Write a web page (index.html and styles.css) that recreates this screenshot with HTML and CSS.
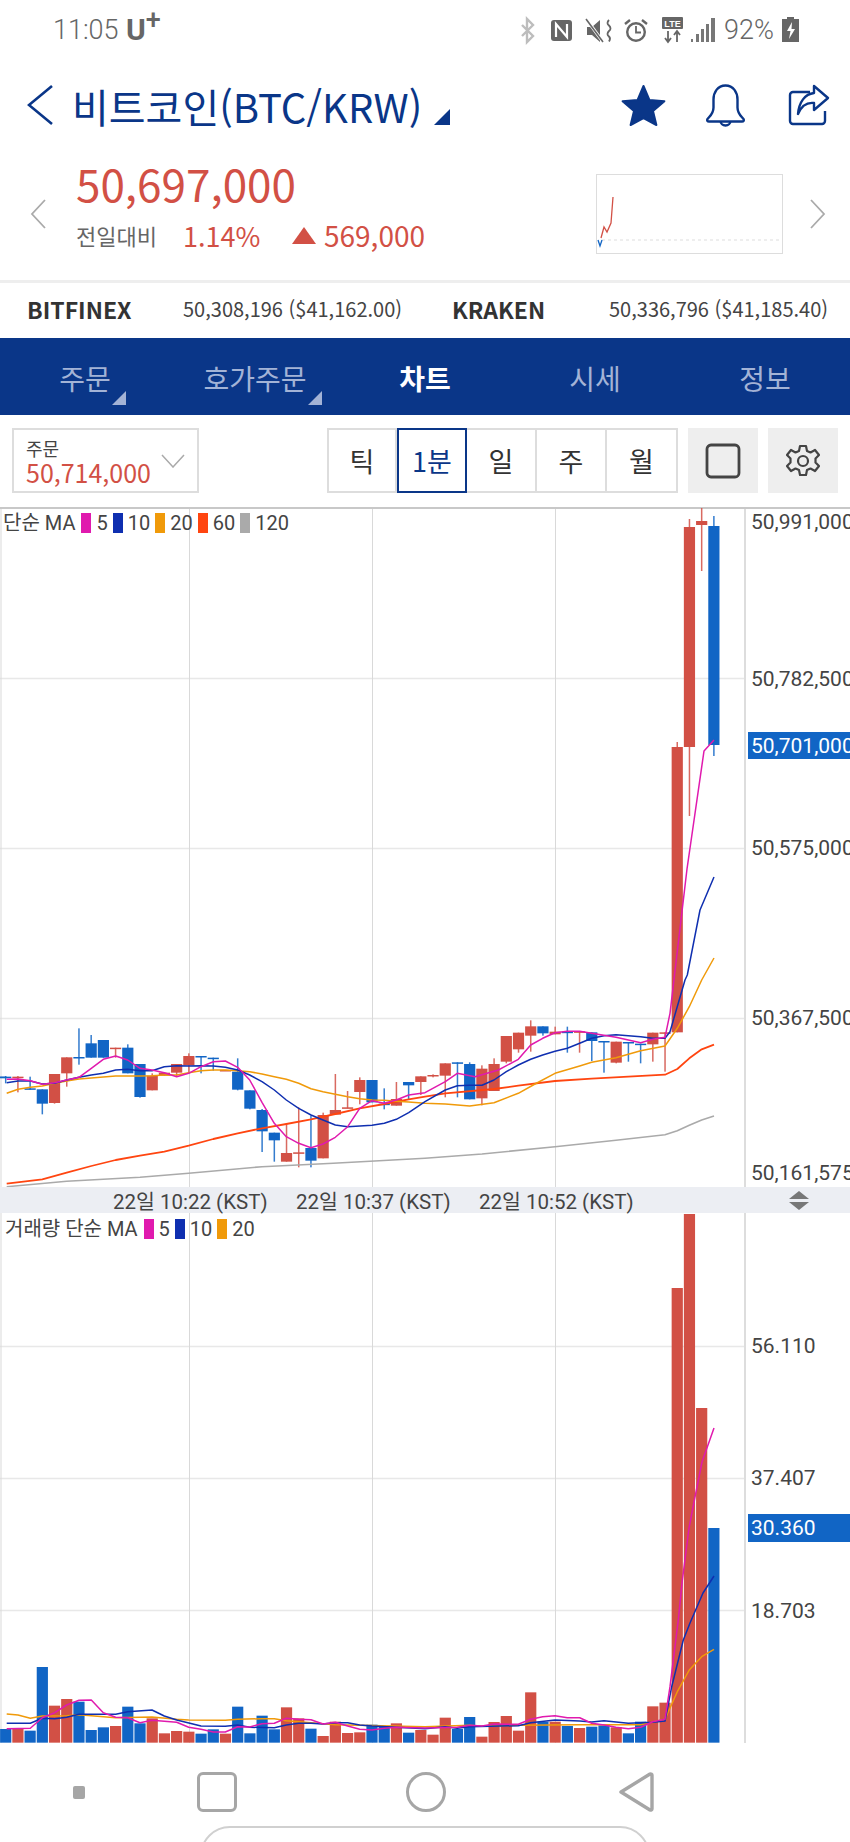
FILE: index.html
```html
<!DOCTYPE html>
<html lang="ko">
<head>
    <meta charset="UTF-8">
    <meta name="viewport" content="width=device-width, initial-scale=1.0">
    <title>비트코인 차트</title>
    <link rel="stylesheet" href="styles.css">
</head>
<body>
    <div class="phone">
        <div class="statusbar">
            <span class="clock">11:05</span>
            <span class="carrier">U<sup>+</sup></span>
            <svg class="status-icons" width="197" height="30" viewBox="520 14 197 30">
                <path d="M522 24 L533 35 L527 41 V18 L533 24 L522 35" fill="none" stroke="#bdbdbd" stroke-width="2.4"/>
                <rect x="551" y="19" width="21" height="21" rx="3" fill="#666"/>
                <path d="M556 36 V23 L567 36 V23" fill="none" stroke="#fff" stroke-width="2.2"/>
                <path d="M587 26 H592 L600 19 V41 L592 34 H587 Z" fill="#666"/>
                <path d="M587 19 L603 41" stroke="#fff" stroke-width="3"/>
                <path d="M586 18 L603 41" stroke="#666" stroke-width="1.6"/>
                <path d="M609 19 q-3 3 0 5.5 q3 3 0 5.5 q-3 3 0 5.5 q2 2 0 5" fill="none" stroke="#666" stroke-width="1.8"/>
                <circle cx="636" cy="31" r="8.8" fill="none" stroke="#666" stroke-width="2.4"/>
                <path d="M636 25 V31.5 H641" fill="none" stroke="#666" stroke-width="1.8"/>
                <path d="M625 23 L630 19 M647 23 L642 19" stroke="#666" stroke-width="2.4"/>
                <rect x="662" y="16" width="21" height="12" rx="1" fill="#666"/>
                <text x="672.5" y="25.5" class="lte">LTE</text>
                <path d="M668 30 V40 M665 37 L668 41 L671 37 M677 41 V31 M674 34 L677 30 L680 34" fill="none" stroke="#666" stroke-width="1.8"/>
                <path d="M691 41 h2 v-3 h-2z M696 41 h3 v-8 h-3z M701 41 h3 v-13 h-3z M706 41 h3 v-18 h-3z M711 41 h4 v-24 h-4z" fill="#777"/>
            </svg>
            <span class="battery-text">92%</span>
            <svg class="battery" width="18" height="26" viewBox="782 16 18 26">
                <path d="M787 16 h7 v2 h5 v23 h-17 v-23 h5z" fill="#666"/>
                <path d="M792 21 L787 30 H790.5 L789 38 L795 28 H791.5 Z" fill="#fff"/>
            </svg>
        </div>

        <header class="title-row">
            <svg class="back" width="26" height="42" viewBox="27 87 26 42">
                <path d="M52 89 L29 108 L52 127" fill="none" stroke="#0a3688" stroke-width="2.6"/>
            </svg>
            <h1>비트코인(BTC/KRW)</h1>
            <span class="corner-arrow"></span>
            <div class="title-actions">
                <svg width="46" height="44" viewBox="621 86 46 44">
                    <path d="M643.5 89 L649.4 102.9 L664.4 104.2 L653 114.1 L656.4 128 L643.5 121 L630.6 128 L634 114.1 L622.6 104.2 L637.6 102.9 Z" fill="#0a3688" stroke="#0a3688" stroke-width="2" stroke-linejoin="round"/>
                </svg>
                <svg width="42" height="44" viewBox="705 86 42 44">
                    <path d="M725.5 88.5 c-8 0 -12 7 -12 14 v8 c0 6 -3 8 -6 11.500 c-1 1.500 0 2.500 1.500 2.500 h33 c1.500 0 2.500 -1 1.500 -2.500 c-3 -3.500 -6 -5.500 -6 -11.500 v-8 c0 -7 -4 -14 -12 -14z M720.500 124 a5 4.500 0 0 0 10 0" fill="none" stroke="#0a3688" stroke-width="2.400"/>
                </svg>
                <svg class="share" width="42" height="44" viewBox="788 86 42 44">
                    <path d="M810 95 H793 a3 3 0 0 0 -3 3 v26 a3 3 0 0 0 3 3 h29 a3 3 0 0 0 3 -3 v-10" fill="none" stroke="#0a3688" stroke-width="2.400"/>
                    <path d="M814 89 L828 101 L814 113 V106 C 806 105 801 110 798 117 C 799 105 805 97 814 96 Z" fill="none" stroke="#0a3688" stroke-width="2.400" stroke-linejoin="round"/>
                </svg>
            </div>
        </header>

        <section class="quote">
            <svg class="quote-arrow" width="16" height="30" viewBox="0 0 16 30">
                <path d="M15 1 L2 15 L15 29" fill="none" stroke="#aaa" stroke-width="1.800"/>
            </svg>
            <div class="quote-main">
                <div class="price">50,697,000</div>
                <div class="change">
                    <span class="change-label">전일대비</span>
                    <span class="change-rate">1.14%</span>
                    <span class="up-mark"></span>
                    <span class="change-amount">569,000</span>
                </div>
            </div>
            <svg class="mini-chart" width="187" height="80" viewBox="596 174 187 80">
                <rect x="596.500" y="174.500" width="186" height="79" fill="#fff" stroke="#ddd"/>
                <path d="M602 240 H780" stroke="#ddd" stroke-width="1" stroke-dasharray="3 3"/>
                <path d="M598 240 L600 246 L602 240" fill="none" stroke="#1165c5" stroke-width="1.300"/>
                <path d="M601 238 L604 227 L607 232 L611 223 L613 197" fill="none" stroke="#d25045" stroke-width="1.300"/>
            </svg>
            <svg class="quote-arrow next" width="16" height="30" viewBox="0 0 16 30">
                <path d="M1 1 L14 15 L1 29" fill="none" stroke="#aaa" stroke-width="1.800"/>
            </svg>
        </section>

        <section class="exchanges">
            <strong>BITFINEX</strong>
            <span>50,308,196 ($41,162.00)</span>
            <strong>KRAKEN</strong>
            <span>50,336,796 ($41,185.40)</span>
        </section>

        <nav class="tabs">
            <a class="tab has-menu">주문</a>
            <a class="tab has-menu">호가주문</a>
            <a class="tab active">차트</a>
            <a class="tab">시세</a>
            <a class="tab">정보</a>
        </nav>

        <section class="toolbar">
            <div class="order-box">
                <div>
                    <div class="order-label">주문</div>
                    <div class="order-price">50,714,000</div>
                </div>
                <svg width="24" height="14" viewBox="0 0 24 14">
                    <path d="M1 1 L12 13 L23 1" fill="none" stroke="#aaa" stroke-width="1.500"/>
                </svg>
            </div>
            <div class="periods">
                <button>틱</button>
                <button class="selected">1분</button>
                <button>일</button>
                <button>주</button>
                <button>월</button>
            </div>
            <button class="tool-btn">
                <svg width="36" height="36" viewBox="0 0 36 36">
                    <rect x="2" y="2" width="32" height="32" rx="4" fill="none" stroke="#444" stroke-width="2.800"/>
                </svg>
            </button>
            <button class="tool-btn">
                <svg width="36" height="36" viewBox="0 0 36 36">
                    <path d="M15 3 h6 l1 5 l3.500 1.500 l4.500 -2.500 l4 5 l-3.500 3.500 l0 4 l3.500 3.500 l-4 5 l-4.500 -2.500 l-3.500 1.500 l-1 5 h-6 l-1 -5 l-3.500 -1.500 l-4.500 2.500 l-4 -5 l3.500 -3.500 l0 -4 l-3.500 -3.500 l4 -5 l4.500 2.500 l3.500 -1.500 z" fill="none" stroke="#444" stroke-width="2.200" stroke-linejoin="round"/>
                    <circle cx="18" cy="18" r="5" fill="none" stroke="#444" stroke-width="2.200"/>
                </svg>
            </button>
        </section>

        <section class="panel price-panel">
            <svg id="priceChart" width="850" height="680" viewBox="0 507 850 680">
                <g class="grid">
                    <path d="M0 678.500 H745 M0 848.500 H745 M0 1018.500 H745"/>
                    <path class="grid-v" d="M1 507 V1187 M189.500 507 V1187 M372.500 507 V1187 M555.500 507 V1187"/>
                    <path class="grid-edge" d="M745 507 V1187"/>
                    <path class="grid-top" d="M0 507.500 H850"/>
                </g>
                <g id="priceSeries"></g>
                <g class="axis">
                    <text x="751" y="529">50,991,000</text>
                    <text x="751" y="686">50,782,500</text>
                    <text x="751" y="855">50,575,000</text>
                    <text x="751" y="1025">50,367,500</text>
                    <text x="751" y="1180">50,161,575</text>
                    <rect class="badge" x="748" y="732" width="102" height="27"/>
                    <text class="badge-text" x="751" y="753">50,701,000</text>
                </g>
            </svg>
            <div class="legend">
                <span class="legend-name">단순 MA</span>
                <i class="swatch ma5"></i><span>5</span>
                <i class="swatch ma10"></i><span>10</span>
                <i class="swatch ma20"></i><span>20</span>
                <i class="swatch ma60"></i><span>60</span>
                <i class="swatch ma120"></i><span>120</span>
            </div>
        </section>

        <div class="time-axis">
            <span class="tick">22일 10:22 (KST)</span>
            <span class="tick">22일 10:37 (KST)</span>
            <span class="tick">22일 10:52 (KST)</span>
            <svg class="resize-handle" width="22" height="20" viewBox="0 0 22 20">
                <path d="M11 0 L21 8 H1 Z M1 11 H21 L11 19 Z" fill="#777"/>
            </svg>
        </div>

        <section class="panel volume-panel">
            <svg id="volumeChart" width="850" height="530" viewBox="0 1213 850 530">
                <g class="grid">
                    <path d="M0 1346.500 H745 M0 1478.500 H745 M0 1610.500 H745"/>
                    <path class="grid-v" d="M1 1213 V1743 M189.500 1213 V1743 M372.500 1213 V1743 M555.500 1213 V1743"/>
                    <path class="grid-edge" d="M745 1213 V1743"/>
                </g>
                <g id="volumeSeries"></g>
                <g class="axis">
                    <text x="751" y="1353">56.110</text>
                    <text x="751" y="1485">37.407</text>
                    <text x="751" y="1618">18.703</text>
                    <rect class="badge" x="748" y="1514" width="102" height="28"/>
                    <text class="badge-text" x="751" y="1535">30.360</text>
                </g>
            </svg>
            <div class="legend volume-legend">
                <span class="legend-name">거래량 단순 MA</span>
                <i class="swatch ma5"></i><span>5</span>
                <i class="swatch ma10"></i><span>10</span>
                <i class="swatch ma20"></i><span>20</span>
            </div>
        </section>

        <footer class="softkeys">
            <span class="key-dot"></span>
            <span class="key-square"></span>
            <span class="key-circle"></span>
            <svg width="36" height="42" viewBox="0 0 36 42">
                <path d="M32 3 a1.500 1.500 0 0 1 2 1.500 V37.500 a1.500 1.500 0 0 1 -2 1.500 L3 21 Z" fill="none" stroke="#a6a6a6" stroke-width="3.400" stroke-linejoin="round"/>
            </svg>
            <div class="pill"></div>
        </footer>
    </div>
    <script src="chart.js"></script>
</body>
</html>
```

FILE: styles.css
```css
/* Global */
* {
    box-sizing: border-box;
}
html, body {
    margin: 0;
    padding: 0;
    background: #fff;
}
body {
    font-family: "Noto Sans CJK KR", "Noto Sans", sans-serif;
    color: #333;
}
.phone {
    width: 850px;
    height: 1842px;
    overflow: hidden;
}
svg {
    display: block;
}

/* Status bar */
.statusbar {
    height: 60px;
    display: flex;
    align-items: center;
    padding-left: 53px;
    color: #666;
    font-family: Roboto, sans-serif;
}
.clock {
    font-size: 27px;
    font-weight: 300;
    width: 73px;
}
.carrier {
    width: 40px;
    font-size: 30px;
    font-weight: 700;
    line-height: 1;
}
.carrier sup {
    font-size: 27px;
    font-weight: 500;
    line-height: 0;
    vertical-align: 11px;
}
.status-icons {
    margin-left: 354px;
}
.lte {
    font: 700 9px "Liberation Sans", sans-serif;
    fill: #fff;
    text-anchor: middle;
}
.battery-text {
    font-size: 27px;
    font-weight: 300;
    margin-left: 7px;
    width: 51px;
}
.battery {
    margin-left: 7px;
}

/* Title */
.title-row {
    height: 90px;
    display: flex;
    align-items: center;
    padding: 0 20px 0 27px;
    color: #0a3688;
}
.back {
    margin-right: 19px;
}
.title-row h1 {
    margin: 0;
    font-size: 40px;
    font-weight: 400;
    line-height: 1;
    position: relative;
    top: 1px;
}
.corner-arrow {
    width: 0;
    height: 0;
    margin: 24px 0 0 12px;
    border-style: solid;
    border-width: 0 0 16px 16px;
    border-color: transparent transparent #0a3688 transparent;
}
.title-actions {
    margin-left: auto;
    display: flex;
    gap: 38px;
}
.title-actions .share {
    margin-left: 3px;
}

/* Quote */
.quote {
    display: flex;
    align-items: flex-start;
    border-bottom: 3px solid #eee;
    height: 133px;
    padding-left: 30px;
}
.quote-arrow {
    margin-top: 49px;
}
.quote-arrow.next {
    margin-left: 27px;
}
.quote-main {
    width: 550px;
    padding: 6px 0 0 30px;
}
.price {
    font-size: 44px;
    line-height: 54px;
    color: #d25045;
}
.change {
    display: flex;
    align-items: center;
    height: 38px;
    margin-top: 6px;
}
.change-label {
    font-size: 22px;
    color: #666;
    width: 107px;
}
.change-rate {
    font-size: 27px;
    color: #d25045;
    width: 109px;
}
.up-mark {
    width: 0;
    height: 0;
    border-style: solid;
    border-width: 0 12.5px 17px 12.5px;
    border-color: transparent transparent #d25045 transparent;
    margin-right: 8px;
}
.change-amount {
    font-size: 28px;
    color: #d25045;
}
.mini-chart {
    margin-top: 24px;
}

/* Exchange prices */
.exchanges {
    height: 55px;
    display: grid;
    grid-template-columns: 156px 269px 157px 1fr;
    align-items: center;
    padding: 0 0 4px 27px;
    font-size: 20px;
    color: #444;
}
.exchanges strong {
    font-size: 23px;
    font-weight: 700;
    color: #333;
}

/* Tabs */
.tabs {
    height: 77px;
    display: grid;
    grid-template-columns: repeat(5, 1fr);
    background-color: #0a3688;
}
.tab {
    position: relative;
    display: flex;
    justify-content: center;
    align-items: center;
    padding-top: 2px;
    font-size: 28px;
    color: #a3b3d6;
}
.tab.active {
    color: #fff;
    font-weight: 700;
}
.tab.has-menu::after {
    content: "";
    position: absolute;
    top: 53px;
    width: 0;
    height: 0;
    border-style: solid;
    border-width: 0 0 14px 14px;
    border-color: transparent transparent #a3b3d6 transparent;
}
.tab.has-menu:nth-child(1)::after {
    left: 112px;
}
.tab.has-menu:nth-child(2)::after {
    left: 138px;
}

/* Toolbar */
.toolbar {
    height: 92px;
    display: flex;
    align-items: flex-start;
    gap: 10px;
    padding: 13px 12px 0;
}
.order-box {
    width: 187px;
    height: 65px;
    border: 2px solid #ddd;
    display: flex;
    align-items: center;
    justify-content: space-between;
    padding: 0 12px;
}
.order-label {
    font-size: 18px;
    line-height: 22px;
    color: #444;
}
.order-price {
    font-size: 25px;
    line-height: 26px;
    color: #d25045;
}
.periods {
    margin-left: auto;
    display: grid;
    grid-template-columns: 68px 70px 70px 70px 69px;
    height: 65px;
    width: 351px;
    border: 2px solid #ddd;
}
.periods button {
    background: #fff;
    border: none;
    border-right: 2px solid #ddd;
    padding: 0;
    font-family: inherit;
    font-size: 27px;
    color: #333;
}
.periods button:last-child {
    border-right: none;
}
.periods button.selected {
    color: #0a3688;
    margin: -2px 0;
    border: 2px solid #0a3688;
}
.tool-btn {
    width: 70px;
    height: 65px;
    background: #eee;
    border: none;
    padding: 0;
    display: flex;
    align-items: center;
    justify-content: center;
}

/* Charts */
.panel {
    position: relative;
}
.price-panel {
    height: 680px;
}
.volume-panel {
    height: 530px;
}
.grid path {
    fill: none;
    stroke: #e8e8e8;
    stroke-width: 1.500;
}
.grid .grid-v {
    stroke: #d9d9d9;
    stroke-width: 1;
}
.grid .grid-edge {
    stroke: #ddd;
    stroke-width: 2;
}
.grid .grid-top {
    stroke: #c8c8c8;
    stroke-width: 3;
}
.axis text {
    font: 400 21px Roboto, sans-serif;
    fill: #444;
}
.axis .badge {
    fill: #1165c5;
}
.axis .badge-text {
    fill: #fff;
}
.legend {
    position: absolute;
    left: 3px;
    top: 6px;
    display: flex;
    align-items: center;
    gap: 5px;
    font: 400 20px Roboto, "Noto Sans CJK KR", sans-serif;
    line-height: 20px;
    color: #444;
}
.legend-name {
    margin-right: 1px;
}
.volume-legend {
    left: 5px;
}
.swatch {
    width: 10px;
    height: 20px;
}
.ma5 { background-color: #e01aae; }
.ma10 { background-color: #0f2fb0; }
.ma20 { background-color: #f09a0a; }
.ma60 { background-color: #ff4510; }
.ma120 { background-color: #aaa; }

/* Time axis */
.time-axis {
    position: relative;
    height: 26px;
    background-color: #eceef3;
    font: 400 20.5px Roboto, "Noto Sans CJK KR", sans-serif;
    color: #444;
    display: flex;
    align-items: center;
    padding-left: 113px;
}
.tick {
    width: 183px;
    white-space: nowrap;
}
.resize-handle {
    position: absolute;
    left: 788px;
    top: 4px;
}

/* Soft keys */
.softkeys {
    position: relative;
    height: 99px;
    display: flex;
    align-items: flex-start;
    padding: 29px 0 0 73px;
}
.key-dot {
    width: 12px;
    height: 13px;
    margin-top: 14px;
    background: #a6a6a6;
    border-radius: 2px;
}
.key-square {
    width: 40px;
    height: 40px;
    margin-left: 112px;
    border: 3.500px solid #a6a6a6;
    border-radius: 6px;
}
.key-circle {
    width: 40px;
    height: 40px;
    margin-left: 169px;
    border: 3.500px solid #a6a6a6;
    border-radius: 50%;
}
.softkeys svg {
    margin-left: 172px;
    margin-top: -1px;
}
.pill {
    position: absolute;
    left: 200px;
    top: 83px;
    width: 450px;
    height: 60px;
    border: 2px solid #d0d0d0;
    border-radius: 30px;
}
```

FILE: chart.js
```js
// candles: [colour, bodyTop, bodyBottom, wickTop, wickBottom], readings from the 3x crops
var RED = '#d25045';
var BLUE = '#1165c5';
var SVG_NS = 'http://www.w3.org/2000/svg';

function slotX(i) {
    return 5.7 + 12.21 * i;
}

// readings were taken on a 3x crop starting at y=980
function priceY(z) {
    return 980 + z / 3;
}

// same for the volume panel, crop starts at y=1620
function volumeY(z) {
    return 1620 + z / 3;
}

function add(parent, name, attrs) {
    var el = document.createElementNS(SVG_NS, name);
    for (var key in attrs) {
        el.setAttribute(key, attrs[key]);
    }
    parent.appendChild(el);
    return el;
}

var candles = [
    ['b', 290, 293, 288, 310], ['r', 290, 293, 288, 337], ['b', 325, 329, 290, 329], ['b', 328, 371, 328, 403],
    ['r', 282, 369, 282, 371], ['r', 232, 280, 232, 320], ['b', 231, 234, 145, 254], ['b', 190, 233, 165, 233],
    ['b', 180, 233, 180, 233], ['r', 203, 206, 203, 233], ['b', 203, 280, 193, 280], ['b', 252, 351, 252, 353],
    ['r', 287, 331, 280, 331], ['r', 278, 287, 278, 287], ['r', 252, 278, 252, 290], ['r', 228, 256, 220, 278],
    ['b', 228, 231, 228, 280], ['b', 233, 236, 233, 272], ['r', 270, 273, 270, 273], ['b', 275, 329, 235, 331],
    ['b', 331, 386, 331, 388], ['b', 390, 454, 387, 516], ['b', 458, 481, 458, 545], ['r', 519, 545, 430, 545],
    ['r', 517, 520, 382, 562], ['b', 504, 542, 407, 562], ['r', 405, 535, 398, 535], ['r', 390, 404, 282, 404],
    ['r', 382, 385, 333, 385], ['r', 300, 336, 292, 373], ['b', 300, 367, 300, 367], ['b', 371, 375, 325, 388],
    ['r', 357, 377, 306, 377], ['b', 306, 316, 306, 357], ['r', 289, 306, 289, 345], ['r', 285, 288, 283, 292],
    ['r', 250, 287, 250, 352], ['b', 247, 250, 247, 352], ['b', 252, 358, 247, 358], ['r', 266, 355, 256, 376],
    ['r', 252, 333, 235, 333], ['r', 168, 245, 168, 250], ['r', 158, 208, 158, 218], ['r', 139, 167, 121, 215],
    ['b', 139, 160, 139, 167], ['r', 155, 163, 140, 163], ['b', 155, 157, 140, 218], ['r', 154, 157, 154, 218],
    ['b', 157, 183, 157, 243], ['b', 183, 186, 183, 278], ['r', 185, 248, 185, 250], ['b', 186, 188, 186, 245],
    ['b', 191, 193, 191, 250], ['r', 158, 193, 158, 245], ['r', 157, 159, 157, 275], ['r', -699, 157, -714, 157],
    ['r', -1359, -699, -1383, -492], ['r', -1377, -1365, -1416, -1227], ['b', -1362, -705, -1392, -672]
];

// [colour, top reading] per slot, the tall ones go negative because they start above the crop
var volumes = [
    ['b', 327], ['r', 327], ['b', 332], ['b', 141], ['r', 257], ['r', 237], ['b', 245], ['b', 330],
    ['b', 322], ['r', 318], ['b', 260], ['b', 310], ['r', 295], ['r', 340], ['r', 333], ['r', 335],
    ['b', 341], ['b', 328], ['r', 341], ['b', 260], ['b', 340], ['b', 287], ['b', 328], ['r', 262],
    ['r', 295], ['b', 326], ['r', 348], ['r', 305], ['r', 339], ['r', 337], ['b', 314], ['b', 318],
    ['r', 310], ['b', 338], ['r', 330], ['r', 344], ['r', 293], ['b', 327], ['b', 291], ['r', 350],
    ['r', 306], ['r', 288], ['r', 332], ['r', 217], ['b', 305], ['r', 305], ['b', 318], ['r', 324],
    ['b', 320], ['b', 316], ['r', 322], ['b', 340], ['b', 305], ['r', 259], ['r', 248], ['r', -996],
    ['r', -1218], ['r', -636], ['b', -276]
];

// moving averages, x in the joined 3x crops (page x = x / 3)
var priceLines = [
    { color: '#ff4510', width: 1.8, pts: [[20,611],[127,598],[200,578],[274,558],[347,540],[420,527],[493,515],[566,497],[640,477],[713,460],[786,445],[859,432],[933,418],[1006,402],[1079,385],[1153,372],[1226,358],[1275,350],[1336,340],[1482,327],[1555,317],[1665,303],[1775,296],[1885,290],[1995,284],[2032,267],[2068,235],[2105,208],[2142,194]] },
    { color: '#aaaaaa', width: 1.6, pts: [[20,620],[200,604],[420,592],[566,580],[786,560],[1000,550],[1275,535],[1446,522],[1665,500],[1848,481],[1995,464],[2032,452],[2068,436],[2105,420],[2142,408]] },
    { color: '#f09a0a', width: 1.5, pts: [[20,340],[54,328],[91,322],[127,318],[164,310],[200,303],[237,297],[274,294],[310,291],[347,288],[383,288],[420,288],[456,287],[493,285],[530,285],[566,278],[603,272],[640,270],[676,270],[713,272],[749,275],[786,282],[823,290],[859,298],[896,310],[933,326],[969,335],[1006,343],[1043,350],[1079,356],[1116,360],[1153,361],[1189,364],[1226,366],[1275,370],[1336,372],[1409,378],[1482,368],[1555,340],[1605,312],[1665,280],[1739,258],[1775,247],[1848,233],[1922,212],[1995,198],[2032,145],[2068,80],[2105,0],[2142,-66]] },
    { color: '#0f2fb0', width: 1.5, pts: [[20,308],[54,303],[91,303],[127,312],[164,310],[200,300],[237,292],[274,285],[310,280],[347,270],[383,268],[420,272],[456,272],[493,260],[530,257],[566,258],[603,257],[640,258],[676,262],[713,270],[749,285],[786,305],[823,330],[859,360],[896,385],[933,405],[969,420],[1006,435],[1043,440],[1116,436],[1153,430],[1189,418],[1226,398],[1275,365],[1336,330],[1372,317],[1409,316],[1446,316],[1482,300],[1519,275],[1555,255],[1592,238],[1628,225],[1665,214],[1702,205],[1739,190],[1775,175],[1812,167],[1848,164],[1885,167],[1922,170],[1958,175],[1995,175],[2010,155],[2055,0],[2062,-15],[2100,-210],[2142,-309]] },
    { color: '#e01aae', width: 1.5, pts: [[20,298],[54,297],[91,302],[127,313],[164,308],[200,300],[237,292],[274,265],[310,238],[347,228],[383,240],[420,265],[456,270],[493,278],[530,290],[566,280],[603,260],[640,245],[676,243],[713,262],[749,300],[786,367],[823,430],[859,470],[896,490],[933,503],[969,492],[1006,472],[1043,440],[1079,385],[1116,362],[1153,370],[1189,360],[1226,345],[1275,338],[1336,305],[1372,280],[1425,290],[1495,270],[1555,238],[1592,195],[1628,175],[1665,158],[1702,154],[1739,154],[1775,160],[1848,172],[1922,188],[1958,178],[1995,172],[2010,100],[2061,-333],[2112,-687],[2142,-720]] }
];

var volumeLines = [
    { color: '#f09a0a', width: 1.5, pts: [[20,282],[54,285],[91,295],[127,288],[200,287],[237,284],[274,287],[347,293],[456,291],[530,298],[566,300],[676,301],[713,298],[786,296],[823,296],[859,302],[933,308],[1006,314],[1079,316],[1275,320],[1409,316],[1446,319],[1555,316],[1739,314],[1922,314],[1995,298],[2032,215],[2068,150],[2105,110],[2142,88]] },
    { color: '#0f2fb0', width: 1.5, pts: [[20,310],[91,310],[127,295],[164,296],[200,292],[237,283],[310,283],[347,283],[383,275],[456,270],[493,288],[530,300],[603,318],[676,319],[713,315],[749,322],[823,323],[859,315],[896,310],[933,310],[969,312],[1006,308],[1043,308],[1079,315],[1116,318],[1189,322],[1275,326],[1335,320],[1372,325],[1409,320],[1555,317],[1592,308],[1665,300],[1739,303],[1775,306],[1812,302],[1885,310],[1958,307],[1995,303],[2015,200],[2050,60],[2070,9],[2109,-81],[2142,-132]] },
    { color: '#e01aae', width: 1.5, pts: [[20,326],[91,325],[127,293],[164,278],[200,255],[237,241],[274,240],[310,278],[347,292],[383,293],[420,308],[456,301],[530,307],[566,322],[603,328],[640,336],[676,336],[713,320],[749,321],[786,311],[823,310],[859,295],[896,298],[933,299],[969,312],[1006,307],[1043,318],[1079,328],[1116,330],[1153,325],[1189,322],[1275,324],[1372,322],[1409,316],[1446,318],[1482,312],[1555,313],[1592,298],[1628,290],[1665,287],[1702,293],[1739,293],[1775,310],[1812,315],[1848,322],[1885,326],[1922,322],[1958,305],[1995,298],[2010,200],[2035,0],[2046,-111],[2067,-276],[2085,-369],[2106,-474],[2142,-576]] }
];

function drawLine(group, line, toY) {
    var d = line.pts.map(function (p, i) {
        return (i ? 'L' : 'M') + (p[0] / 3).toFixed(1) + ' ' + toY(p[1]).toFixed(1);
    }).join(' ');
    add(group, 'path', { d: d, fill: 'none', stroke: line.color, 'stroke-width': line.width, 'stroke-linejoin': 'round' });
}

var priceGroup = document.getElementById('priceSeries');
candles.forEach(function (c, i) {
    var x = slotX(i);
    var color = c[0] === 'r' ? RED : BLUE;
    add(priceGroup, 'rect', { x: x - 0.75, y: priceY(c[3]), width: 1.5, height: priceY(c[4]) - priceY(c[3]), fill: color, opacity: 0.85 });
    add(priceGroup, 'rect', { x: x - 5.6, y: priceY(c[1]), width: 11.2, height: Math.max(priceY(c[2]) - priceY(c[1]), 1.5), fill: color });
});
// the stray dash left of the first candle
add(priceGroup, 'rect', { x: 0, y: priceY(290), width: 5.5, height: 1.5, fill: BLUE });
priceLines.forEach(function (line) {
    drawLine(priceGroup, line, priceY);
});

var volumeGroup = document.getElementById('volumeSeries');
var base = volumeY(368);
volumes.forEach(function (v, i) {
    var top = volumeY(v[1]);
    add(volumeGroup, 'rect', { x: slotX(i) - 5.6, y: top, width: 11.2, height: base - top, fill: v[0] === 'r' ? RED : BLUE });
});
volumeLines.forEach(function (line) {
    drawLine(volumeGroup, line, volumeY);
});
```
